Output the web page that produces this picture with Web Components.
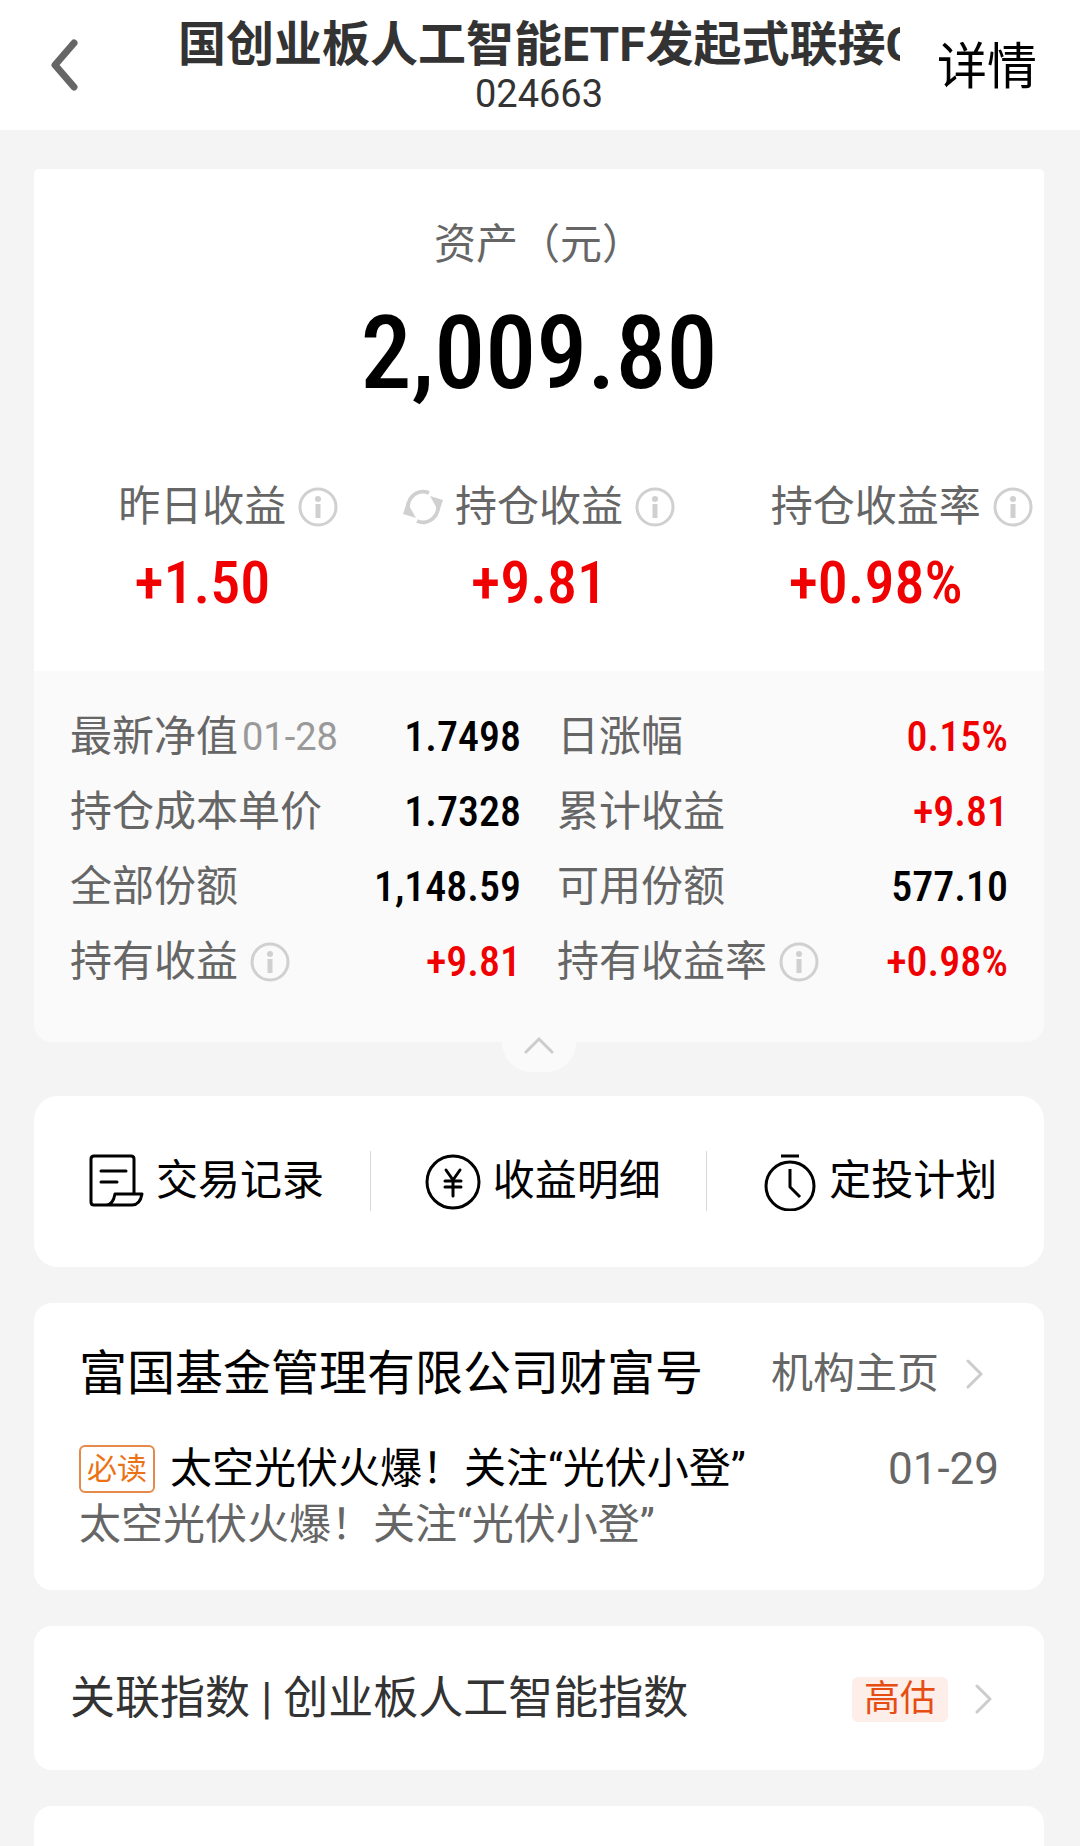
<!DOCTYPE html>
<html lang="zh-CN">
<head>
<meta charset="UTF-8">
<meta name="viewport" content="width=device-width, initial-scale=1.0">
<title>基金持仓</title>
<style>
    :root {
        --num: "Roboto Condensed", "Liberation Sans Narrow", Roboto, sans-serif;
        --text: #666;
        --red: #f00000;
    }

    body {
        margin: 0;
        min-height: 100vh;
        display: flex;
        flex-direction: column;
        background: #f4f4f4;
        color: #000;
        font-family: Roboto, "Noto Sans CJK SC", sans-serif;
        font-size: 42px;
        line-height: 56px;
    }

    main {
        flex: 1;
        display: flex;
        flex-direction: column;
        gap: 36px;
        padding: 39px 36px 0 34px;
    }
</style>
</head>
<body>
    <fund-header code="024663">国创业板人工智能ETF发起式联接C</fund-header>

    <main>
        <asset-card amount="2,009.80">
            <profit-item slot="profit" label="昨日收益" value="+1.50"></profit-item>
            <profit-item slot="profit" label="持仓收益" value="+9.81" refresh></profit-item>
            <profit-item slot="profit" label="持仓收益率" value="+0.98%"></profit-item>

            <detail-row label="最新净值" note="01-28" value="1.7498"></detail-row>
            <detail-row label="日涨幅" value="0.15%" up></detail-row>
            <detail-row label="持仓成本单价" value="1.7328"></detail-row>
            <detail-row label="累计收益" value="+9.81" up></detail-row>
            <detail-row label="全部份额" value="1,148.59"></detail-row>
            <detail-row label="可用份额" value="577.10"></detail-row>
            <detail-row label="持有收益" value="+9.81" up info></detail-row>
            <detail-row label="持有收益率" value="+0.98%" up info></detail-row>
        </asset-card>

        <quick-links>
            <quick-link icon="record">交易记录</quick-link>
            <quick-link icon="yuan">收益明细</quick-link>
            <quick-link icon="timer">定投计划</quick-link>
        </quick-links>

        <news-card tag="必读" date="01-29">
            <span slot="name">富国基金管理有限公司财富号</span>
            <span slot="more">机构主页</span>
            <span slot="title">太空光伏火爆！关注“光伏小登”</span>
            <span slot="summary">太空光伏火爆！关注“光伏小登”</span>
        </news-card>

        <index-card level="高估">关联指数 | 创业板人工智能指数</index-card>

        <next-card></next-card>
    </main>

<script>
    const icons = {
        back: `<svg width="28" height="52" viewBox="0 0 28 52" fill="none" stroke="#666" stroke-width="7" stroke-linecap="round" stroke-linejoin="round"><path d="M24 4 5 26l19 22"/></svg>`,
        info: `<svg width="40" height="40" viewBox="0 0 40 40" fill="none" stroke="#d0d0d0"><circle cx="20" cy="20" r="18" stroke-width="3"/><circle cx="20" cy="12" r="3" fill="#d0d0d0" stroke="none"/><path d="M20 17v14" stroke-width="5"/></svg>`,
        refresh: `<svg width="40" height="40" viewBox="0 0 40 40"><g fill="none" stroke="#d0d0d0" stroke-width="4"><path d="M26 6A15 15 0 0 0 6 25"/><path d="M14 34A15 15 0 0 0 34 15"/></g><path d="M0 27l4-12 9 16zM40 13l-4 12-9-16z" fill="#d0d0d0"/></svg>`,
        right: `<svg width="18" height="30" viewBox="0 0 18 30" fill="none" stroke="#ccc" stroke-width="3" stroke-linecap="round" stroke-linejoin="round"><path d="M2 2l13 13L2 28"/></svg>`,
        up: `<svg width="30" height="18" viewBox="0 0 30 18" fill="none" stroke="#ccc" stroke-width="3" stroke-linecap="round"><path d="M2 16 15 3l13 13"/></svg>`,
        record: `<svg width="56" height="60" viewBox="0 0 56 60" fill="none" stroke="#000" stroke-width="3" stroke-linecap="round" stroke-linejoin="round"><path d="M46 43V8q0-3-3-3H6Q3 5 3 8v43q0 3 3 3h38q8 0 10-11H27q-2 11-9 11M13 20h25M13 31h16"/></svg>`,
        yuan: `<svg width="56" height="60" viewBox="0 0 56 60" fill="none" stroke="#000" stroke-width="3" stroke-linecap="round"><circle cx="28" cy="31" r="26"/><path d="M21 19l7 10 7-10M28 30v15M20 30h16M20 36h16"/></svg>`,
        timer: `<svg width="56" height="60" viewBox="0 0 56 60" fill="none" stroke="#000" stroke-width="3"><circle cx="29" cy="35" r="24"/><path d="M20 5h18M29 18v18l10 10"/></svg>`
    };

    // shared by every element
    const base = `
        * { box-sizing: border-box; margin: 0; padding: 0; }
        :host { display: block; }
        svg { display: block; flex: none; }
        a { color: inherit; text-decoration: none; }
        button { border: 0; background: none; font: inherit; color: inherit; cursor: pointer; }
    `;

    class FundHeader extends HTMLElement {
        connectedCallback() {
            this.attachShadow({ mode: 'open' });
            this.shadowRoot.innerHTML = `
                <style>
                    ${base}
                    header {
                        display: grid;
                        grid-template-columns: 178px minmax(0, 1fr) 180px;
                        align-items: center;
                        height: 130px;
                        background: #fff;
                    }
                    .back { justify-self: start; padding: 0 50px; }
                    .center { text-align: center; color: #333; }
                    h1 {
                        font-size: 48px;
                        line-height: 58px;
                        font-weight: 700;
                        text-align: left;
                        white-space: nowrap;
                        overflow: hidden;
                    }
                    .code { font-size: 38px; line-height: 40px; }
                    .detail { font-size: 50px; padding: 4px 0 0 37px; white-space: nowrap; }
                </style>
                <header>
                    <button class="back" aria-label="返回">${icons.back}</button>
                    <div class="center">
                        <h1><slot></slot></h1>
                        <p class="code">${this.getAttribute('code')}</p>
                    </div>
                    <a class="detail" href="#">详情</a>
                </header>
            `;
        }
    }

    class AssetCard extends HTMLElement {
        connectedCallback() {
            this.attachShadow({ mode: 'open' });
            this.shadowRoot.innerHTML = `
                <style>
                    ${base}
                    :host { position: relative; margin-bottom: 18px; }
                    .summary {
                        padding: 48px 0 52px;
                        background: #fff;
                        border-radius: 5px 5px 0 0;
                        text-align: center;
                    }
                    .caption { color: var(--text); }
                    .amount { font: 500 102px/120px var(--num); margin-top: 20px; }
                    .profits {
                        display: grid;
                        grid-template-columns: repeat(3, minmax(0, 1fr));
                        margin-top: 66px;
                    }
                    .details {
                        display: grid;
                        grid-template-columns: repeat(2, minmax(0, 1fr));
                        column-gap: 36px;
                        padding: 28px 36px 43px;
                        background: #fafafa;
                        border-radius: 0 0 18px 18px;
                    }
                    /* tab hanging under the card edge */
                    .fold {
                        position: absolute;
                        top: 100%;
                        left: 50%;
                        width: 74px;
                        height: 30px;
                        margin-left: -37px;
                        display: flex;
                        justify-content: center;
                        background: #fafafa;
                        border-radius: 0 0 37px 37px;
                    }
                    .fold svg { margin-top: -6px; }
                </style>
                <section class="summary">
                    <p class="caption">资产（元）</p>
                    <p class="amount">${this.getAttribute('amount')}</p>
                    <div class="profits"><slot name="profit"></slot></div>
                </section>
                <section class="details"><slot></slot></section>
                <button class="fold" aria-label="收起">${icons.up}</button>
            `;
        }
    }

    class ProfitItem extends HTMLElement {
        connectedCallback() {
            this.attachShadow({ mode: 'open' });
            this.shadowRoot.innerHTML = `
                <style>
                    ${base}
                    .label {
                        display: grid;
                        grid-template-columns: 1fr auto 1fr;
                        align-items: center;
                        column-gap: 12px;
                        color: var(--text);
                        white-space: nowrap;
                    }
                    .left { justify-self: end; }
                    .right { justify-self: start; }
                    .value { font: 500 60px/72px var(--num); color: var(--red); margin-top: 12px; }
                </style>
                <div class="label">
                    <span class="left">${this.hasAttribute('refresh') ? icons.refresh : ''}</span>
                    <span>${this.getAttribute('label')}</span>
                    <button class="right" aria-label="说明">${icons.info}</button>
                </div>
                <p class="value">${this.getAttribute('value')}</p>
            `;
        }
    }

    class DetailRow extends HTMLElement {
        connectedCallback() {
            const note = this.getAttribute('note');
            this.attachShadow({ mode: 'open' });
            this.shadowRoot.innerHTML = `
                <style>
                    ${base}
                    :host {
                        display: flex;
                        align-items: center;
                        height: 75px;
                        white-space: nowrap;
                    }
                    .label { color: var(--text); }
                    .note { font-size: 38px; color: #999; margin-left: 4px; }
                    .info { margin-left: 12px; }
                    .value { font: 500 42px/56px var(--num); margin-left: auto; }
                    :host([up]) .value { color: var(--red); }
                </style>
                <span class="label">${this.getAttribute('label')}</span>
                ${note ? `<span class="note">${note}</span>` : ''}
                ${this.hasAttribute('info') ? `<button class="info" aria-label="说明">${icons.info}</button>` : ''}
                <span class="value">${this.getAttribute('value')}</span>
            `;
        }
    }

    class QuickLinks extends HTMLElement {
        connectedCallback() {
            this.attachShadow({ mode: 'open' });
            this.shadowRoot.innerHTML = `
                <style>
                    ${base}
                    nav {
                        display: grid;
                        grid-template-columns: repeat(3, minmax(0, 1fr));
                        padding: 55px 0 56px;
                        background: #fff;
                        border-radius: 24px;
                    }
                    ::slotted(:not(:last-child)) { border-right: 1px solid #d8d8d8; }
                </style>
                <nav><slot></slot></nav>
            `;
        }
    }

    class QuickLink extends HTMLElement {
        connectedCallback() {
            this.attachShadow({ mode: 'open' });
            this.shadowRoot.innerHTML = `
                <style>
                    ${base}
                    a {
                        display: flex;
                        align-items: center;
                        gap: 12px;
                        padding-left: 54px;
                        white-space: nowrap;
                    }
                </style>
                <a href="#">${icons[this.getAttribute('icon')]}<span><slot></slot></span></a>
            `;
        }
    }

    class NewsCard extends HTMLElement {
        connectedCallback() {
            this.attachShadow({ mode: 'open' });
            this.shadowRoot.innerHTML = `
                <style>
                    ${base}
                    article {
                        padding: 39px 45px 37px;
                        background: #fff;
                        border-radius: 18px;
                    }
                    .head, .line, .more { display: flex; align-items: center; white-space: nowrap; }
                    .head { justify-content: space-between; padding-right: 15px; }
                    h2 { font-size: 48px; line-height: 64px; font-weight: 400; }
                    .more { gap: 27px; color: var(--text); }
                    .line { margin-top: 35px; }
                    .tag {
                        padding: 0 6px;
                        border: 2px solid #e58a4a;
                        border-radius: 6px;
                        color: #ec7216;
                        font-size: 30px;
                        line-height: 44px;
                        margin-right: 15px;
                    }
                    time { font-size: 44px; color: var(--text); margin-left: auto; }
                    .summary { color: var(--text); }
                </style>
                <article>
                    <div class="head">
                        <h2><slot name="name"></slot></h2>
                        <a class="more" href="#"><slot name="more"></slot>${icons.right}</a>
                    </div>
                    <div class="line">
                        <span class="tag">${this.getAttribute('tag')}</span>
                        <a href="#"><slot name="title"></slot></a>
                        <time>${this.getAttribute('date')}</time>
                    </div>
                    <p class="summary"><slot name="summary"></slot></p>
                </article>
            `;
        }
    }

    class IndexCard extends HTMLElement {
        connectedCallback() {
            this.attachShadow({ mode: 'open' });
            this.shadowRoot.innerHTML = `
                <style>
                    ${base}
                    a {
                        display: flex;
                        align-items: center;
                        padding: 43px 51px 41px 36px;
                        background: #fff;
                        border-radius: 18px;
                        color: #333;
                        font-size: 45px;
                        line-height: 60px;
                        white-space: nowrap;
                    }
                    .level {
                        margin-left: auto;
                        margin-right: 27px;
                        padding: 0 12px;
                        border-radius: 6px;
                        background: #fdeee9;
                        color: #e64d12;
                        font-size: 36px;
                        line-height: 45px;
                    }
                </style>
                <a href="#">
                    <span><slot></slot></span>
                    <span class="level">${this.getAttribute('level')}</span>
                    ${icons.right}
                </a>
            `;
        }
    }

    // top of the following card, runs off the bottom of the screen
    class NextCard extends HTMLElement {
        connectedCallback() {
            this.attachShadow({ mode: 'open' });
            this.shadowRoot.innerHTML = `
                <style>
                    ${base}
                    :host {
                        flex: 1;
                        min-height: 36px;
                        background: #fff;
                        border-radius: 18px 18px 0 0;
                    }
                </style>
            `;
        }
    }

    customElements.define('fund-header', FundHeader);
    customElements.define('asset-card', AssetCard);
    customElements.define('profit-item', ProfitItem);
    customElements.define('detail-row', DetailRow);
    customElements.define('quick-links', QuickLinks);
    customElements.define('quick-link', QuickLink);
    customElements.define('news-card', NewsCard);
    customElements.define('index-card', IndexCard);
    customElements.define('next-card', NextCard);
</script>
</body>
</html>
